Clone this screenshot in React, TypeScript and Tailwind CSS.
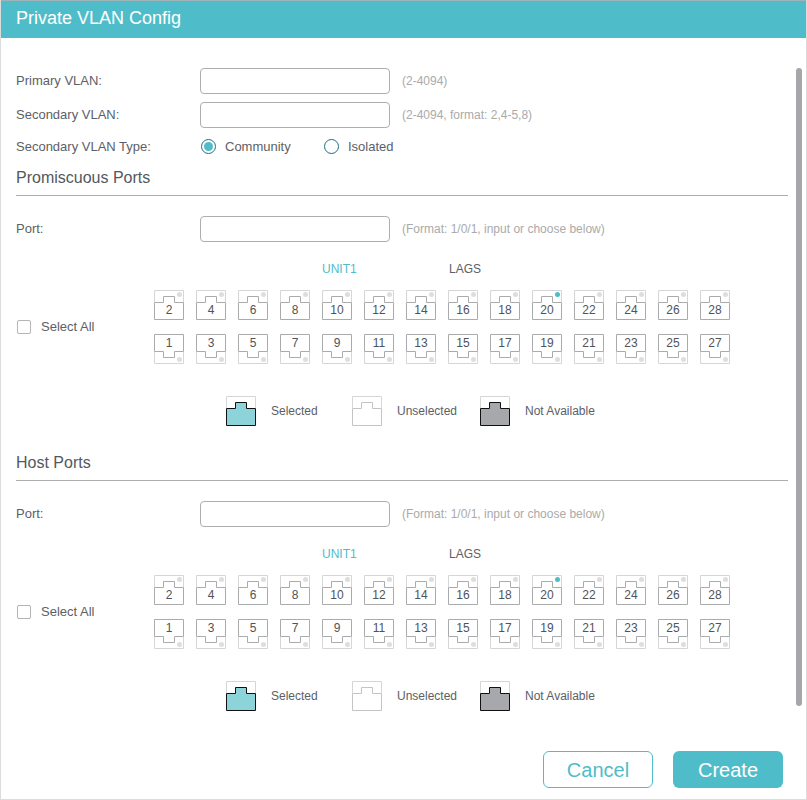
const evenPorts = [2, 4, 6, 8, 10, 12, 14, 16, 18, 20, 22, 24, 26, 28];
const oddPorts = [1, 3, 5, 7, 9, 11, 13, 15, 17, 19, 21, 23, 25, 27];

// Upper ports have the socket at the bottom of the box, lower ports are the same drawing flipped
const Port = ({ num, flip, linked }: { num: number; flip?: boolean; linked?: boolean }) => (
  <div className="relative w-[30px] h-[30px]">
    <svg width="30" height="30" viewBox="0 0 30 30" className={`absolute inset-0 ${flip ? "-scale-y-100" : ""}`}>
      <path d="M.5 12V.5h29V12" fill="none" stroke="#d6d6d6" />
      <path d="M.5 12.5h9v-6h11v6h9v17H.5z" fill="#fff" stroke="#aaabad" />
      <circle cx="25.5" cy="4.5" r="2.5" fill={linked ? "#4fbdc9" : "#dedede"} />
    </svg>
    <span className={`absolute left-0 right-0 text-center text-[12px] leading-[14px] text-[#4f545a] ${flip ? "top-[2px]" : "top-[13px]"}`}>
      {num}
    </span>
  </div>
);

const LegendIcon = ({ fill, stroke }: { fill: string; stroke: string }) => (
  <svg width="30" height="30" viewBox="0 0 30 30">
    <path d="M.5 12V.5h29V12" fill="none" stroke="#d6d6d6" />
    <path d="M.5 12.5h9v-6h11v6h9v17H.5z" fill={fill} stroke={stroke} />
  </svg>
);

const PortSection = ({ title }: { title: string }) => (
  <section className="h-[285px]">
    <h2 className="h-[31px] ml-4 mr-[18px] pt-px border-b border-[#aeaeae] text-[16px] leading-[24px] text-[#54585e]">{title}</h2>
    <div className="flex items-center h-[26px] mt-5 pl-4 text-[13px] text-[#5c6066]">
      <label className="w-[184px]">Port:</label>
      <input className="w-[190px] h-[26px] rounded border border-[#aeaeae] bg-white" />
      <span className="ml-3 text-[12px] text-[#aaaaaa]">(Format: 1/0/1, input or choose below)</span>
    </div>
    <div className="flex items-end mt-[18px] pl-[17px]">
      <div className="flex items-center w-[137px] h-[74px]">
        <span className="w-[14px] h-[14px] rounded-[2px] border border-[#b4b4b4]" />
        <span className="ml-[10px] text-[13px] text-[#5c6066]">Select All</span>
      </div>
      <div className="grid grid-cols-[repeat(14,30px)] gap-x-3 gap-y-[14px]">
        <div className="col-start-5 col-span-3 h-4 pt-px text-[12px] leading-4 text-[#4fbdc9]">UNIT1</div>
        <div className="col-span-3 h-4 pt-px pl-px text-[12px] leading-4 text-[#5c6066]">LAGS</div>
        <div className="col-span-4" />
        {evenPorts.map((n) => (
          <Port key={n} num={n} linked={n === 20} />
        ))}
        {oddPorts.map((n) => (
          <Port key={n} num={n} flip />
        ))}
      </div>
    </div>
    <div className="flex items-center mt-8 pl-[226px] text-[12px] text-[#5c6066]">
      <div className="flex items-center w-[126px] gap-[15px]">
        <LegendIcon fill="#8cd3da" stroke="#111111" />
        Selected
      </div>
      <div className="flex items-center w-[128px] gap-[15px]">
        <LegendIcon fill="#ffffff" stroke="#c4c4c4" />
        Unselected
      </div>
      <div className="flex items-center gap-[15px]">
        <LegendIcon fill="#a7a8ab" stroke="#111111" />
        Not Available
      </div>
    </div>
  </section>
);

const Radio = ({ checked }: { checked?: boolean }) => (
  <span className="flex items-center justify-center w-[15px] h-[15px] rounded-full border border-[#1d6f7c]">
    {checked && <span className="w-[9px] h-[9px] rounded-full bg-[#4fbdc9]" />}
  </span>
);

export default function App() {
  return (
    <div className="relative flex flex-col w-[807px] h-[800px] overflow-hidden bg-white border-x border-b border-[#dcdcdc] font-['Liberation_Sans',Arial,sans-serif]">
      {/* Header */}
      <header className="flex items-center h-[38px] -mx-px pl-4 pb-0.5 bg-[#4fbdc9] border-t border-[#9fb4b8] text-white text-[18px]">
        Private VLAN Config
      </header>

      <main className="flex-1 -ml-px">
        <div className="pt-[30px] pl-4 text-[13px] text-[#5c6066]">
          <div className="flex items-center h-[26px]">
            <label className="w-[184px]">Primary VLAN:</label>
            <input className="w-[190px] h-[26px] rounded border border-[#aeaeae] bg-white" />
            <span className="ml-3 text-[12px] text-[#aaaaaa]">(2-4094)</span>
          </div>
          <div className="flex items-center h-[26px] mt-2">
            <label className="w-[184px]">Secondary VLAN:</label>
            <input className="w-[190px] h-[26px] rounded border border-[#aeaeae] bg-white" />
            <span className="ml-3 text-[12px] text-[#aaaaaa]">(2-4094, format: 2,4-5,8)</span>
          </div>
          <div className="flex items-center h-[37px]">
            <label className="w-[185px]">Secondary VLAN Type:</label>
            <Radio checked />
            <span className="ml-[9px] w-[99px]">Community</span>
            <Radio />
            <span className="ml-[9px]">Isolated</span>
          </div>
        </div>
        <PortSection title="Promiscuous Ports" />
        <PortSection title="Host Ports" />
      </main>

      {/* Footer buttons */}
      <footer className="flex justify-end gap-5 pr-[23px] pb-[11px] -ml-px">
        <button className="w-[110px] h-[37px] rounded-md border border-[#4fbdc9] bg-white text-[20px] text-[#4fbdc9]">Cancel</button>
        <button className="w-[110px] h-[37px] rounded-md bg-[#4fbdc9] text-[20px] text-white">Create</button>
      </footer>

      {/* Scrollbar thumb */}
      <div className="absolute left-[795px] top-[68px] w-[6px] h-[638px] rounded-[3px] bg-[#a7a7ab]" />
    </div>
  );
}
